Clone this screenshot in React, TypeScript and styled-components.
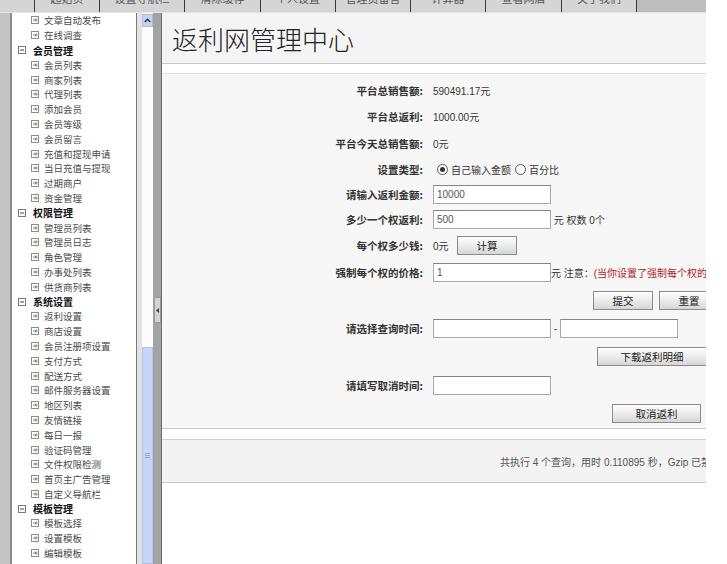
import React from 'react';
import styled, { createGlobalStyle } from 'styled-components';

const GlobalStyle = createGlobalStyle`
  html, body { margin: 0; padding: 0; background: #fff; }
  body {
    font-family: "Liberation Sans", "Noto Sans CJK SC", sans-serif;
    font-size: 10px;
    color: #333;
  }
  * { box-sizing: border-box; }
`;

const cjk = `"Noto Sans CJK SC", "Liberation Sans", sans-serif`;

const Page = styled.div`
  width: 706px;
  height: 564px;
  overflow: hidden;
  display: flex;
  flex-direction: column;
  background: #fff;
`;

const TabBar = styled.div`
  height: 13px;
  flex: none;
  display: flex;
  background: #bdbdbd;
  border-bottom: 1px solid #e6e6e6;
  overflow: hidden;
`;

const Tab = styled.div<{ $w: number }>`
  width: ${p => p.$w}px;
  flex: none;
  background: #d5d5d5;
  border-right: 1px solid #3a3a3a;
  display: flex;
  justify-content: center;
  overflow: hidden;
`;

const TabLabel = styled.span`
  font-family: ${cjk};
  font-size: 11px;
  line-height: 12px;
  margin-top: -8px;
  color: #555;
  white-space: nowrap;
`;

const Body = styled.div`
  flex: 1;
  display: flex;
  min-height: 0;
`;

const LeftEdge = styled.div`
  width: 12px;
  flex: none;
  background: #c4c4c4;
  border-right: 2px solid #8b8b8b;
`;

const Sidebar = styled.div`
  width: 124px;
  flex: none;
  background: #fff;
  overflow: hidden;
`;

const SideRow = styled.div<{ $group?: boolean }>`
  height: 14.8px;
  display: flex;
  align-items: center;
  padding-left: ${p => (p.$group ? 6 : 19)}px;
  gap: ${p => (p.$group ? 7 : 5)}px;
  font-family: ${cjk};
  font-size: ${p => (p.$group ? 10 : 9.5)}px;
  font-weight: ${p => (p.$group ? 700 : 400)};
  color: ${p => (p.$group ? '#111' : '#4a4a4a')};
  white-space: nowrap;
  svg { flex: none; }
`;

const Scrollbar = styled.div`
  width: 17px;
  flex: none;
  border-left: 1px solid #7a7a7a;
  background: #e2e2e2;
  padding-left: 5px;
  display: flex;
`;

const Track = styled.div`
  flex: 1;
  background: #fbfbfb;
  display: flex;
  flex-direction: column;
`;

const ScrollButton = styled.div`
  height: 13px;
  margin-top: 1px;
  background: #c5d4f4;
  border: 1px solid #aab9de;
  display: flex;
  align-items: center;
  justify-content: center;
`;

const Thumb = styled.div`
  margin-top: auto;
  height: 217px;
  background: #c7d6f7;
  border: 1px solid #b3c3e8;
  display: flex;
  align-items: center;
  justify-content: center;
`;

const Splitter = styled.div`
  width: 8px;
  flex: none;
  background: #a3a3a3;
  display: flex;
  flex-direction: column;
  align-items: center;
`;

const SplitToggle = styled.div`
  margin-top: 284px;
  width: 7px;
  height: 26px;
  background: #d3d3d3;
  border: 1px solid #9a9a9a;
  display: flex;
  align-items: center;
  justify-content: center;
`;

const Main = styled.div`
  flex: 1;
  min-width: 0;
  border-left: 1px solid #6c6c6c;
  display: flex;
  flex-direction: column;
  background: #fff;
  overflow: hidden;
`;

const Header = styled.div`
  height: 51px;
  flex: none;
  background: #f4f4f4;
  border-bottom: 1px solid #c9c9c9;
  display: flex;
  align-items: center;
  padding-left: 10px;
  font-family: ${cjk};
  font-size: 26px;
  font-weight: 300;
  color: #222;
`;

const Form = styled.div`
  margin-top: 9px;
  background: #f7f7f7;
  border-top: 1px solid #dedede;
  border-bottom: 1px solid #c8c8c8;
  padding-top: 3px;
`;

const Row = styled.div<{ $h: number }>`
  height: ${p => p.$h}px;
  display: grid;
  grid-template-columns: 261px 1fr;
  column-gap: 10px;
  align-items: center;
`;

const Label = styled.div`
  text-align: right;
  font-family: ${cjk};
  font-size: 10.5px;
  font-weight: 700;
  color: #333;
  white-space: nowrap;
`;

const Value = styled.div<{ $indent?: number; $gap?: number }>`
  display: flex;
  align-items: center;
  gap: ${p => p.$gap || 0}px;
  padding-left: ${p => p.$indent || 0}px;
  white-space: nowrap;
  font-size: 10px;
  color: #333;
`;

const Input = styled.input`
  width: 118px;
  height: 19px;
  flex: none;
  margin: 0;
  padding: 0 3px;
  border: 1px solid #a9a9a9;
  border-top-color: #858585;
  background: #fff;
  font-family: "Liberation Sans", sans-serif;
  font-size: 10px;
  color: #555;
  outline: none;
`;

const Button = styled.button<{ $w: number }>`
  width: ${p => p.$w}px;
  height: 19px;
  flex: none;
  margin: 0;
  padding: 0;
  border: 1px solid #8c8c8c;
  background: linear-gradient(#fefefe, #ececec 50%, #d6d6d6);
  font-family: ${cjk};
  font-size: 10.5px;
  color: #222;
`;

const Radio = styled.span<{ $on?: boolean }>`
  width: 11px;
  height: 11px;
  flex: none;
  border-radius: 50%;
  border: 1px solid #555;
  background: #fff;
  margin: 0 3px 0 4px;
  display: flex;
  align-items: center;
  justify-content: center;
  &::after {
    content: '';
    width: 5px;
    height: 5px;
    border-radius: 50%;
    background: ${p => (p.$on ? '#333' : 'transparent')};
  }
`;

const Note = styled.span`
  color: #b02020;
`;

const Footer = styled.div`
  margin-top: 10px;
  height: 44px;
  flex: none;
  background: #f3f3f3;
  border-top: 1px solid #d2d2d2;
  border-bottom: 1px solid #c6c6c6;
  display: flex;
  align-items: center;
  padding-left: 338px;
  white-space: nowrap;
  font-family: "Liberation Sans", "Noto Sans CJK SC", sans-serif;
  font-size: 10px;
  color: #555;
`;

const tabs = [
  { w: 35, label: '' },
  { w: 65, label: '起始页' },
  { w: 85, label: '设置导航栏' },
  { w: 76, label: '清除缓存' },
  { w: 75, label: '个人设置' },
  { w: 75, label: '管理员留言' },
  { w: 75, label: '计算器' },
  { w: 76, label: '查看网店' },
  { w: 75, label: '关于我们' },
];

const menu: { title?: string; items: string[] }[] = [
  { items: ['文章自动发布', '在线调查'] },
  {
    title: '会员管理',
    items: ['会员列表', '商家列表', '代理列表', '添加会员', '会员等级', '会员留言', '充值和提现申请', '当日充值与提现', '过期商户', '资金管理'],
  },
  { title: '权限管理', items: ['管理员列表', '管理员日志', '角色管理', '办事处列表', '供货商列表'] },
  {
    title: '系统设置',
    items: ['返利设置', '商店设置', '会员注册项设置', '支付方式', '配送方式', '邮件服务器设置', '地区列表', '友情链接', '每日一报', '验证码管理', '文件权限检测', '首页主广告管理', '自定义导航栏'],
  },
  { title: '模板管理', items: ['模板选择', '设置模板', '编辑模板'] },
];

const ItemIcon = () => (
  <svg width="8" height="8" viewBox="0 0 8 8">
    <rect x="0.5" y="0.5" width="7" height="7" fill="none" stroke="#8e8e8e" />
    <path d="M2 4h3M3.8 2.6L5.2 4L3.8 5.4M5.8 2.5v3" fill="none" stroke="#666" strokeWidth="0.8" />
  </svg>
);

const GroupIcon = () => (
  <svg width="8" height="8" viewBox="0 0 8 8">
    <rect x="0.5" y="0.5" width="7" height="7" fill="none" stroke="#7a7a7a" />
    <path d="M2 4h4" stroke="#444" />
  </svg>
);

export default function App() {
  return (
    <Page>
      <GlobalStyle />
      <TabBar>
        {tabs.map((t, i) => (
          <Tab key={i} $w={t.w}>
            <TabLabel>{t.label}</TabLabel>
          </Tab>
        ))}
      </TabBar>
      <Body>
        <LeftEdge />
        <Sidebar>
          {menu.map((g, gi) => (
            <React.Fragment key={gi}>
              {g.title && (
                <SideRow $group>
                  <GroupIcon />
                  {g.title}
                </SideRow>
              )}
              {g.items.map(it => (
                <SideRow key={it}>
                  <ItemIcon />
                  {it}
                </SideRow>
              ))}
            </React.Fragment>
          ))}
        </Sidebar>
        <Scrollbar>
          <Track>
            <ScrollButton>
              <svg width="7" height="5" viewBox="0 0 7 5">
                <path d="M0.8 4L3.5 1.2L6.2 4" fill="none" stroke="#333" strokeWidth="1.4" />
              </svg>
            </ScrollButton>
            <Thumb>
              <svg width="5" height="5" viewBox="0 0 5 5">
                <path d="M0 0.5h5M0 2.5h5M0 4.5h5" stroke="#93a6d2" />
              </svg>
            </Thumb>
          </Track>
        </Scrollbar>
        <Splitter>
          <SplitToggle>
            <svg width="3" height="5" viewBox="0 0 3 5">
              <path d="M3 0L0 2.5L3 5z" fill="#444" />
            </svg>
          </SplitToggle>
        </Splitter>
        <Main>
          <Header>返利网管理中心</Header>
          <Form>
            <Row $h={26}>
              <Label>平台总销售额:</Label>
              <Value>590491.17元</Value>
            </Row>
            <Row $h={27}>
              <Label>平台总返利:</Label>
              <Value>1000.00元</Value>
            </Row>
            <Row $h={27}>
              <Label>平台今天总销售额:</Label>
              <Value>0元</Value>
            </Row>
            <Row $h={25}>
              <Label>设置类型:</Label>
              <Value>
                <Radio $on />
                自己输入金额
                <Radio />
                百分比
              </Value>
            </Row>
            <Row $h={24}>
              <Label>请输入返利金额:</Label>
              <Value>
                <Input defaultValue="10000" />
              </Value>
            </Row>
            <Row $h={26}>
              <Label>多少一个权返利:</Label>
              <Value>
                <Input defaultValue="500" />
                &nbsp;元 权数 0个
              </Value>
            </Row>
            <Row $h={27}>
              <Label>每个权多少钱:</Label>
              <Value>
                0元&nbsp;&nbsp;&nbsp;
                <Button $w={60}>计算</Button>
              </Value>
            </Row>
            <Row $h={27}>
              <Label>强制每个权的价格:</Label>
              <Value>
                <Input defaultValue="1" />
                元 注意：<Note>(当你设置了强制每个权的价格后，系统将按此价格计算)</Note>
              </Value>
            </Row>
            <Row $h={28}>
              <Label />
              <Value $indent={160} $gap={6}>
                <Button $w={60}>提交</Button>
                <Button $w={60}>重置</Button>
              </Value>
            </Row>
            <Row $h={28}>
              <Label>请选择查询时间:</Label>
              <Value>
                <Input />
                &nbsp;-&nbsp;
                <Input />
              </Value>
            </Row>
            <Row $h={29}>
              <Label />
              <Value $indent={164}>
                <Button $w={110}>下载返利明细</Button>
              </Value>
            </Row>
            <Row $h={28}>
              <Label>请填写取消时间:</Label>
              <Value>
                <Input />
              </Value>
            </Row>
            <Row $h={29}>
              <Label />
              <Value $indent={179}>
                <Button $w={89}>取消返利</Button>
              </Value>
            </Row>
          </Form>
          <Footer>共执行 4 个查询，用时 0.110895 秒，Gzip 已禁用，内存占用 2.156 MB</Footer>
        </Main>
      </Body>
    </Page>
  );
}
